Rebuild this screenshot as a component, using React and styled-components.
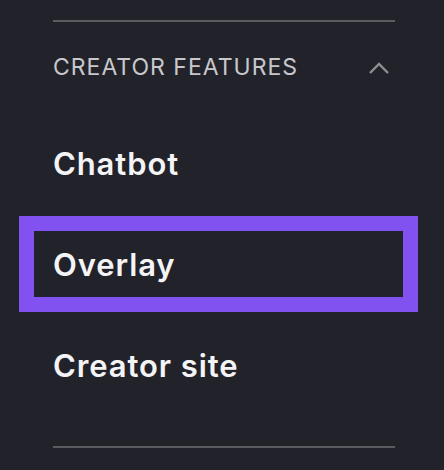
import React from 'react';
import styled, { createGlobalStyle } from 'styled-components';

const GlobalStyle = createGlobalStyle`
  body {
    margin: 0;
    background: #22222a;
    font-family: Inter, "Noto Sans", sans-serif;
  }
`;

const Panel = styled.div`
  width: 444px;
  height: 470px;
  box-sizing: border-box;
  padding: 20px 49px 0 53px;
  background: #22222a;
  overflow: hidden;
`;

const Divider = styled.div`
  height: 2px;
  background: #5a5a61;
  margin-top: ${p => p.$top || 0}px;
`;

const Header = styled.div`
  height: 90px;
  display: flex;
  align-items: center;
  justify-content: space-between;
`;

const HeaderTitle = styled.span`
  font-size: 23px;
  font-weight: 400;
  color: #c8c8cc;
  letter-spacing: 1px;
  text-transform: uppercase;
  margin-top: -1px;
`;

const Chevron = styled.svg`
  width: 22px;
  height: 14px;
  margin-right: 5px;
  margin-top: 2px;
`;

const List = styled.div`
  display: flex;
  flex-direction: column;
  gap: 5px;
  margin-top: 3px;
`;

const Item = styled.div`
  height: 96px;
  box-sizing: border-box;
  display: flex;
  align-items: center;
  margin: 0 -23px 0 -34px;
  padding-left: ${p => (p.$active ? 19 : 34)}px;
  border: ${p => (p.$active ? '15px solid #8152f0' : 'none')};
  font-size: 31px;
  font-weight: 600;
  letter-spacing: 0.9px;
  color: #f4f4f6;
`;

const Sidebar = () => {
  const items = ['Chatbot', 'Overlay', 'Creator site'];

  return (
    <Panel>
      <Divider />
      <Header>
        <HeaderTitle>Creator Features</HeaderTitle>
        <Chevron viewBox="0 0 22 14">
          <path d="M2 12 L11 3 L20 12" fill="none" stroke="#8e8e94" strokeWidth="2.4" />
        </Chevron>
      </Header>
      <List>
        {items.map(item => (
          <Item key={item} $active={item === 'Overlay'}>
            {item}
          </Item>
        ))}
      </List>
      <Divider $top={33} />
    </Panel>
  );
};

export default function App() {
  return (
    <>
      <GlobalStyle />
      <Sidebar />
    </>
  );
}
